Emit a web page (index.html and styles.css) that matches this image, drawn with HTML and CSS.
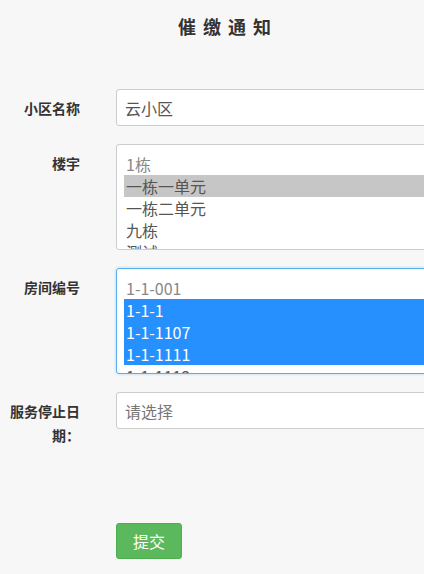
FILE: index.html
```html
<!DOCTYPE html>
<html lang="zh-CN">
<head>
        <meta charset="UTF-8" />
        <meta name="viewport" content="width=device-width, initial-scale=1" />
        <title>催缴通知</title>
        <link rel="stylesheet" href="styles.css">
</head>
<body>

<header>
        <h1>催缴通知</h1>
</header>

<main>
        <form class="form">
                <div class="row">
                        <label class="label">小区名称</label>
                        <input class="control" type="text" value="云小区">
                </div>

                <div class="row">
                        <label class="label">楼宇</label>
                        <div class="listbox">
                                <div class="opt first">1栋</div>
                                <div class="opt picked">一栋一单元</div>
                                <div class="opt">一栋二单元</div>
                                <div class="opt">九栋</div>
                                <div class="opt">测试</div>
                        </div>
                </div>

                <div class="row">
                        <label class="label">房间编号</label>
                        <div class="listbox focused">
                                <div class="opt first">1-1-001</div>
                                <div class="opt active">1-1-1</div>
                                <div class="opt active">1-1-1107</div>
                                <div class="opt active">1-1-1111</div>
                                <div class="opt">1-1-1112</div>
                        </div>
                </div>

                <div class="row">
                        <label class="label">服务停止日期：</label>
                        <input class="control" type="text" placeholder="请选择">
                </div>

                <div class="actions">
                        <button class="btn" type="button">提交</button>
                </div>
        </form>
</main>

</body>
</html>
```

FILE: styles.css
```css
body {
        margin: 0;
        background: #f7f7f7;
        font-family: "Noto Sans CJK SC", "Noto Sans", sans-serif;
        color: #333;
        overflow-x: hidden;
}

header h1 {
        margin: 0;
        padding: 14px 0 0 32px;
        text-align: center;
        font-size: 18px;
        line-height: 24px;
        font-weight: bold;
        letter-spacing: 7px;
        color: #333;
}

main {
        padding-top: 51px;
}

.row {
        display: flex;
        gap: 36px;
        margin-bottom: 18px;
}

.label {
        flex: 0 0 70px;
        margin-left: 10px;
        padding-top: 7px;
        text-align: right;
        font-size: 14px;
        line-height: 24px;
        font-weight: bold;
        color: #333;
}

.control {
        flex: 0 0 420px;
        box-sizing: border-box;
        height: 37px;
        margin: 0;
        padding: 0 8px;
        font-family: inherit;
        font-size: 16px;
        color: #555;
        background: #fff;
        border: 1px solid #ccc;
        border-radius: 3px;
        outline: none;
}

.control::placeholder {
        color: #777;
}

.listbox {
        flex: 0 0 420px;
        box-sizing: border-box;
        height: 106px;
        padding: 8px 0 0 7px;
        overflow: hidden;
        background: #fff;
        border: 1px solid #ccc;
        border-radius: 3px;
}

.listbox.focused {
        border-color: #55b1ee;
        box-shadow: 0 0 3px rgba(102, 175, 233, 0.5);
}

.opt {
        height: 22px;
        padding-left: 2px;
        font-size: 16px;
        line-height: 22px;
        color: #555;
        white-space: nowrap;
}

.opt.first {
        color: #888;
}

.opt.picked {
        background: #c6c6c6;
}

.opt.active {
        background: #2690fe;
        color: #fff;
}

.actions {
        padding: 58px 0 0 116px;
}

.btn {
        width: 66px;
        height: 36px;
        padding: 0;
        font-family: inherit;
        font-size: 16px;
        color: #fff;
        background: #5cb85c;
        border: 1px solid #4cae4c;
        border-radius: 3px;
}
```
